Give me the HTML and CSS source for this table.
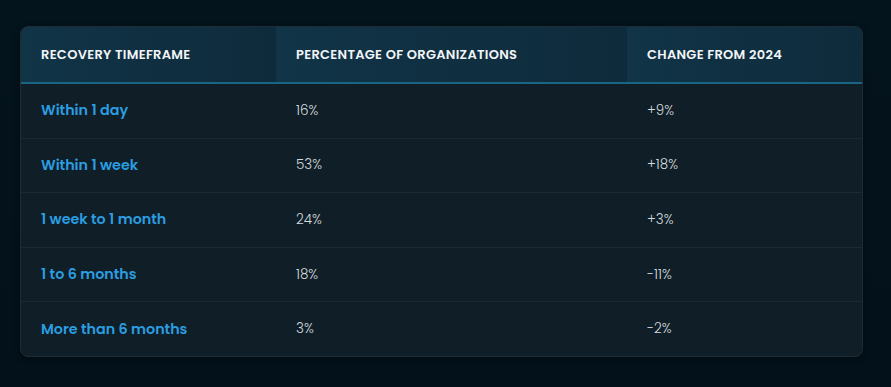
FILE: index.html
```html
<!DOCTYPE html>
<html lang="en">
<head>
<meta charset="utf-8">
<title>Recovery timeframe</title>
<link rel="stylesheet" href="styles.css">
</head>
<body>
<div class="card">
  <table class="data">
    <colgroup>
      <col class="c1"><col class="c2"><col class="c3">
    </colgroup>
    <thead>
      <tr>
        <th>Recovery Timeframe</th>
        <th>Percentage of Organizations</th>
        <th>Change from 2024</th>
      </tr>
    </thead>
    <tbody>
      <tr><td class="label">Within 1 day</td><td>16%</td><td>+9%</td></tr>
      <tr><td class="label">Within 1 week</td><td>53%</td><td>+18%</td></tr>
      <tr><td class="label">1 week to 1 month</td><td>24%</td><td>+3%</td></tr>
      <tr><td class="label">1 to 6 months</td><td>18%</td><td>-11%</td></tr>
      <tr><td class="label">More than 6 months</td><td>3%</td><td>-2%</td></tr>
    </tbody>
  </table>
</div>
</body>
</html>
```
FILE: styles.css
```css
html, body {
  margin: 0;
  padding: 0;
  background: #041219;
  font-family: "Poppins", "Open Sans", "Noto Sans", sans-serif;
}
body {
  padding: 26px 0 0 20px;
  height: 387px;
  box-sizing: border-box;
  background: linear-gradient(180deg, #04141c 0%, #03111a 100%);
}
.card {
  width: 843px;
  box-sizing: border-box;
  border: 1px solid #1c2d37;
  border-radius: 8px;
  overflow: hidden;
  background: #0f1e27;
  box-shadow: 0 2px 6px rgba(0,0,0,0.4);
}
.data {
  width: 100%;
  border-collapse: collapse;
  table-layout: fixed;
}
.c1 { width: 255px; }
.c2 { width: 351px; }
.c3 { width: auto; }
.data th {
  height: 55px;
  padding: 0 0 0 20px;
  text-align: left;
  font-size: 13px;
  font-weight: 600;
  letter-spacing: 0.3px;
  text-transform: uppercase;
  color: #f2f5f7;
  background: linear-gradient(90deg, #113447 0%, #0e2b3b 100%);
  border-bottom: 2px solid #1b6584;
}
.data td {
  height: 53.6px;
  padding: 0 0 0 20px;
  font-size: 13.5px;
  color: #d3dade;
  font-weight: 300;
  border-bottom: 1px solid #1a2a34;
}
.data tbody tr:last-child td { border-bottom: none; }
.data td.label {
  color: #2b9de0;
  font-size: 14.3px;
  font-weight: 600;
}
```
